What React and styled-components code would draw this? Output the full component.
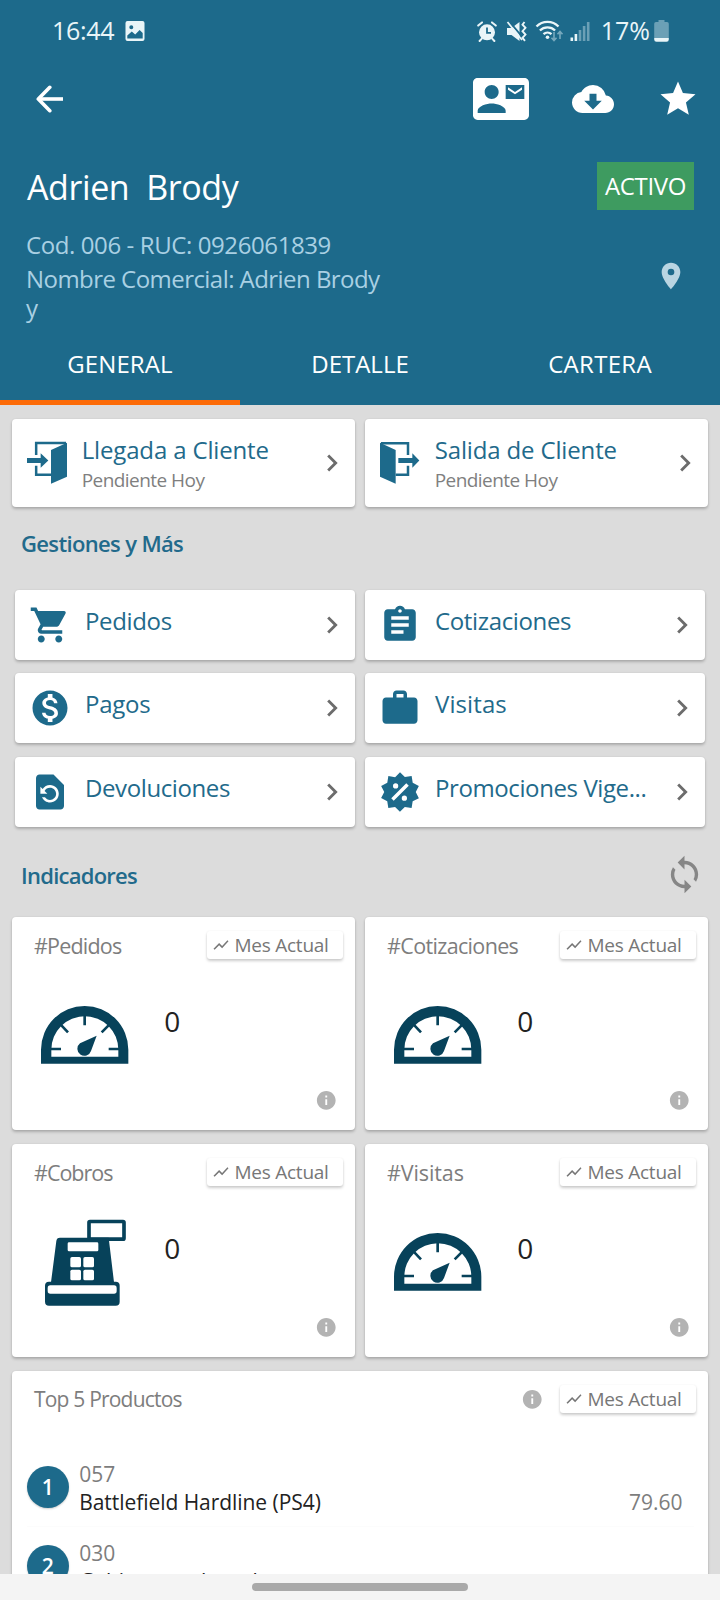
import React from 'react';
import styled, { createGlobalStyle } from 'styled-components';
import {
  MdAssignment,
  MdChevronRight,
  MdCloudDownload,
  MdContactMail,
  MdInfo,
  MdLocationOn,
  MdMonetizationOn,
  MdRestorePage,
  MdShoppingCart,
  MdShowChart,
  MdStar,
  MdSync,
  MdWork,
} from 'react-icons/md';

const BLUE = '#1d6a8b';
const NAVY = '#07425a';

const GlobalStyle = createGlobalStyle`
  * { box-sizing: border-box; }
  body {
    margin: 0;
    font-family: "Open Sans", "Noto Sans", sans-serif;
    background: #dcdcdc;
  }
  svg { display: block; flex: none; }
`;

const Screen = styled.div`
  width: 720px;
  height: 1600px;
  display: flex;
  flex-direction: column;
  overflow: hidden;
  background: #dcdcdc;
`;

/* ---------- header ---------- */

const Header = styled.header`
  flex: none;
  height: 405px;
  display: flex;
  flex-direction: column;
  background: ${BLUE};
  color: #fff;
`;

const StatusBar = styled.div`
  height: 62px;
  padding: 0 51px 0 52px;
  display: flex;
  align-items: center;
  justify-content: space-between;
  color: #e9f5f8;
`;

const StatusGroup = styled.div`
  display: flex;
  align-items: center;
  gap: ${(p) => p.$gap}px;
`;

const StatusText = styled.span`
  padding-bottom: 2px;
  font-size: 25px;
  line-height: 30px;
  letter-spacing: ${(p) => p.$track || 0}px;
`;

const Toolbar = styled.div`
  height: 73px;
  padding: 0 21px 0 35.5px;
  display: flex;
  align-items: center;
  justify-content: space-between;
`;

const Actions = styled.div`
  display: flex;
  align-items: center;
  gap: 43px;
`;

const NameRow = styled.div`
  height: 48px;
  margin: 27px 26px 0 27px;
  display: flex;
  align-items: center;
  justify-content: space-between;
`;

const Name = styled.h1`
  margin: 0;
  padding-top: 2px;
  font-size: 34px;
  line-height: 46px;
  font-weight: 400;
  letter-spacing: -0.4px;
  white-space: pre;
`;

const Badge = styled.span`
  width: 97px;
  height: 48px;
  padding-bottom: 1px;
  display: flex;
  align-items: center;
  justify-content: center;
  background: #3e9b60;
  font-size: 24px;
  letter-spacing: -0.35px;
`;

const InfoRow = styled.div`
  height: 116px;
  padding: 20px 33px 0 26px;
  display: flex;
  justify-content: space-between;
`;

const ClientInfo = styled.div`
  display: flex;
  flex-direction: column;
  gap: 4px;
  width: 370px;
  color: #a9d0e3;
  font-size: 24px;
  line-height: 29.5px;
`;

const Line = styled.div`
  letter-spacing: ${(p) => p.$track}px;
  white-space: pre-line;
`;

const PinSlot = styled.div`
  padding-top: 30px;
  color: #b9d5e2;
`;

const Tabs = styled.nav`
  height: 79px;
  display: grid;
  grid-template-columns: repeat(3, 1fr);
`;

const Tab = styled.div`
  display: flex;
  align-items: center;
  justify-content: center;
  border-bottom: 5px solid ${(p) => (p.$active ? '#fc6b08' : 'transparent')};
  font-size: 24px;
  letter-spacing: ${(p) => p.$track}px;
`;

/* ---------- content ---------- */

const Content = styled.main`
  flex: 1;
  min-height: 0;
  overflow: hidden;
  padding: 14px 12px 0;
`;

const Grid = styled.div`
  display: grid;
  grid-template-columns: 1fr 1fr;
  gap: ${(p) => p.$rowGap}px 10px;
  margin: ${(p) => p.$margin || 0};
`;

const Card = styled.section`
  background: #fff;
  border-radius: 4px;
  box-shadow: 0 2px 3px rgba(0, 0, 0, 0.22), 0 0 2px rgba(0, 0, 0, 0.08);
`;

const VisitCard = styled(Card)`
  height: 88px;
  padding: 0 6.5px 0 14px;
  display: flex;
  align-items: center;
`;

const VisitText = styled.div`
  flex: 1;
  margin-left: 13.7px;
  padding-top: 1px;
  display: flex;
  flex-direction: column;
  gap: 3px;
`;

const VisitTitle = styled.span`
  color: #226a8b;
  font-size: 24px;
  line-height: 30px;
  letter-spacing: -0.15px;
`;

const VisitStatus = styled.span`
  color: #7f7f7f;
  font-size: 19px;
  line-height: 24px;
  letter-spacing: -0.55px;
`;

const SectionHead = styled.div`
  height: ${(p) => p.$height}px;
  padding: ${(p) => p.$drop || 0}px 3px 0 9px;
  display: flex;
  align-items: center;
  justify-content: space-between;
  color: #868686;
`;

const SectionTitle = styled.h2`
  margin: 0;
  color: #226a8b;
  font-size: 22px;
  line-height: 30px;
  font-weight: 600;
  letter-spacing: ${(p) => p.$track}px;
`;

const MenuCard = styled(Card)`
  height: 70px;
  padding: 0 6px 0 14px;
  display: flex;
  align-items: center;
  color: ${BLUE};
`;

const MenuLabel = styled.span`
  flex: 1;
  margin-left: 14px;
  padding-bottom: 8px;
  color: #226a8b;
  font-size: 24px;
  line-height: 32px;
  letter-spacing: ${(p) => p.$track}px;
  white-space: nowrap;
`;

const Chevron = styled(MdChevronRight)`
  width: 34px;
  height: 34px;
  color: #6c6c6c;
`;

/* ---------- indicators ---------- */

const StatCard = styled(Card)`
  height: 213.5px;
  display: flex;
  flex-direction: column;
`;

const CardHead = styled.div`
  padding: 14px 12px 0 22px;
  display: flex;
  align-items: center;
  justify-content: space-between;
`;

const CardTitle = styled.h3`
  margin: 0;
  padding-top: 1.5px;
  color: #7d7d7d;
  font-size: ${(p) => p.$size || 21.5}px;
  line-height: 27px;
  font-weight: 400;
  letter-spacing: ${(p) => p.$track}px;
`;

const ChipBox = styled.span`
  width: 136.5px;
  height: 28.5px;
  padding-left: 5px;
  display: flex;
  align-items: center;
  gap: 5px;
  border-radius: 3px;
  background: #fff;
  box-shadow: 0 2px 3px rgba(0, 0, 0, 0.2), 0 0 2px rgba(0, 0, 0, 0.05);
  color: #777;
  font-size: 19px;
  line-height: 28px;
  letter-spacing: -0.25px;
`;

const StatBody = styled.div`
  flex: 1;
  padding: 30.5px 0 0 27.7px;
  display: flex;
  align-items: flex-start;
  gap: 34.5px;
`;

const StatValue = styled.span`
  margin-top: 12px;
  color: #222;
  font-size: 28px;
  line-height: 39px;
`;

const StatFoot = styled.div`
  display: flex;
  justify-content: flex-end;
  padding: 0 18px 18.5px 0;
`;

const InfoIcon = styled(MdInfo)`
  width: 22.5px;
  height: 22.5px;
  color: #b3b3b3;
`;

/* ---------- top products ---------- */

const TopCard = styled(Card)`
  margin-top: 13.5px;
  height: 420px;
`;

const HeadRight = styled.div`
  display: flex;
  align-items: center;
  gap: 16px;
`;

const ProductList = styled.ul`
  list-style: none;
  margin: 34px 0 0;
  padding: 0;
`;

const Product = styled.li`
  height: 79.3px;
  margin: 0 14px 0 14.7px;
  padding-right: 11.5px;
  display: grid;
  grid-template-columns: 42px 1fr auto;
  column-gap: 10.5px;
  align-items: center;
  border-bottom: 1px solid #fcfcfc;
`;

const Rank = styled.span`
  width: 42px;
  height: 42px;
  border-radius: 50%;
  display: flex;
  align-items: center;
  justify-content: center;
  background: ${BLUE};
  box-shadow: 0 1px 2px rgba(0, 0, 0, 0.2);
  color: #fff;
  font-size: 21px;
  font-weight: 600;
  line-height: 30px;
`;

const ProductText = styled.div`
  padding-top: 3px;
  display: flex;
  flex-direction: column;
  font-size: 21px;
  line-height: 28.4px;
`;

const ProductCode = styled.span`
  color: #7d7d7d;
`;

const ProductName = styled.span`
  color: #222;
  white-space: nowrap;
  letter-spacing: -0.05px;
`;

const ProductValue = styled.span`
  align-self: end;
  margin-bottom: 9px;
  color: #7d7d7d;
  font-size: 21px;
  line-height: 28.4px;
`;

const GestureBar = styled.div`
  flex: none;
  height: 26.5px;
  display: flex;
  align-items: center;
  justify-content: center;
  background: #f4f4f4;
`;

const GestureHandle = styled.div`
  width: 216px;
  height: 8px;
  border-radius: 4px;
  background: #a9a9a9;
`;

/* ---------- icons ---------- */

const ImageIcon = () => (
  <svg width="20" height="20" viewBox="0 0 20 20">
    <path
      fill="currentColor"
      fillRule="evenodd"
      d="M2.5 0h15A2 2 0 0 1 19.500 2v16a2 2 0 0 1-2 2h-15a2 2 0 0 1-2-2V2a2 2 0 0 1 2-2zM6.300 4.200a2 2 0 1 0 0 4 2 2 0 0 0 0-4zM2.300 17.500h15.400v-5.600L14.600 9l-4.400 4.600-3.400-3-4.500 4z"
    />
  </svg>
);

const AlarmIcon = () => (
  <svg width="20" height="21" viewBox="0 0 20 21" fill="none">
    <circle cx="10" cy="11.300" r="8" fill="currentColor" />
    <path d="M1.200 4.600 5 1.400M18.800 4.600 15 1.400M4.800 17.600 2.600 20M15.200 17.600l2.200 2.400" stroke="currentColor" strokeWidth="2" strokeLinecap="round" />
    <path d="M10 6.500v5.300h4" stroke={BLUE} strokeWidth="1.800" />
  </svg>
);

const MuteIcon = () => (
  <svg width="21" height="21" viewBox="0 0 21 21" fill="none">
    <path d="M1 7h4.500L13.500 1v19L5.500 14H1z" fill="currentColor" />
    <path d="M3.800 1.200 14.800 14.200" stroke={BLUE} strokeWidth="1.800" />
    <path d="M1.500 1 16 19" stroke="currentColor" strokeWidth="1.700" />
    <path d="m18.500 1-2 2.600 3 3.200-3 3.400 3 3.400-3 3.200 2.500 3" stroke="currentColor" strokeWidth="1.900" />
  </svg>
);

const WifiIcon = () => (
  <svg width="29" height="22" viewBox="0 0 29 22" fill="none">
    <path d="M1.500 6.500a15.500 15.500 0 0 1 22 0M4.900 10.500a10.800 10.800 0 0 1 15.200 0M8.500 14.200a5.800 5.800 0 0 1 8 0" stroke="currentColor" strokeWidth="2.300" />
    <circle cx="12.500" cy="17.200" r="1.800" fill="currentColor" />
    <path d="M19 12v8.500m-2.500-2.800 2.500 2.800 2.500-2.800M25 19v-7.500m-2.500 2.800 2.500-2.800 2.500 2.800" stroke="#77a9bd" strokeWidth="1.600" />
  </svg>
);

const SignalIcon = () => (
  <svg width="20" height="21" viewBox="0 0 20 21">
    <path fill="currentColor" d="M.5 16.500h2.600V20H.500zM4.600 13h2.600v7H4.600z" />
    <path fill="#6ba0b6" d="M8.700 9h2.600v11H8.700zM12.800 5h2.600v15h-2.600zM16.900 1h2.600v19h-2.600z" />
  </svg>
);

const BatteryIcon = () => (
  <svg width="15" height="22" viewBox="0 0 15 22">
    <path fill="#6ba0b6" d="M4.500 0h6v2H13a1.800 1.800 0 0 1 1.800 1.800V18H.200V3.800A1.800 1.800 0 0 1 2 2h2.500z" />
    <path fill="currentColor" d="M.2 18h14.600v1.500A2.300 2.300 0 0 1 12.500 21.800h-10A2.300 2.300 0 0 1 .200 19.500z" />
  </svg>
);

const BackIcon = () => (
  <svg width="28" height="28" viewBox="0 0 28 28" fill="none" stroke="currentColor" strokeWidth="3.600">
    <path d="M2 14h25" />
    <path d="M13.800 2.300 2.300 14l11.500 11.700" strokeLinecap="round" strokeLinejoin="round" />
  </svg>
);

const EnterIcon = () => (
  <svg width="42" height="45" viewBox="78 123 126 135">
    <path fill="none" stroke={BLUE} strokeWidth="7.500" d="M108.500 165v-36H198M108.500 197v27H153" />
    <path fill={BLUE} d="M153 150 201 128V230L153 251zM81 174h41v-14l23 21.500L122 203v-14H81z" />
  </svg>
);

const ExitIcon = () => (
  <svg width="42" height="45" viewBox="87 123 126 135">
    <path fill="none" stroke={BLUE} strokeWidth="7.500" d="M93 129.500h81V165M137 224h37v-27" />
    <path fill={BLUE} d="M90 128 137 150V251L90 230zM145 174h42v-14l21 21.500L187 203v-14h-42z" />
  </svg>
);

const SaleIcon = () => (
  <svg width="42" height="42" viewBox="0 0 24 24">
    <path
      fill="currentColor"
      fillRule="evenodd"
      d="M18.650 2.850L19.260 6.710L22.770 8.500L21 12L22.780 15.500L19.240 17.290L18.630 21.150L14.740 20.540L11.970 23.300L9.190 20.500L5.330 21.140L4.710 17.250L1.220 15.470L3 11.970L1.230 8.500L4.740 6.690L5.350 2.860L9.220 3.500L12 .69L14.770 3.460L18.650 2.850M9.500 7A1.500 1.500 0 0 0 8 8.500A1.500 1.500 0 0 0 9.500 10A1.500 1.500 0 0 0 11 8.500A1.500 1.500 0 0 0 9.500 7M14.500 14A1.500 1.500 0 0 0 13 15.500A1.500 1.500 0 0 0 14.500 17A1.500 1.500 0 0 0 16 15.500A1.500 1.500 0 0 0 14.500 14M8.410 17L17 8.410L15.590 7L7 15.590L8.410 17Z"
    />
  </svg>
);

const GaugeIcon = () => (
  <svg width="90" height="90" viewBox="120 270 270 270">
    <path
      fill={NAVY}
      fillRule="evenodd"
      d="M123 491v-42a131 131 0 0 1 262 0v42zM154 470h201v-21a100.500 100.500 0 0 0-201 0z"
    />
    <path fill="none" stroke={NAVY} strokeWidth="8" d="M254 346v30M152 447h31M357 447h-31M182 374l22 23M328 374l-23 23" />
    <path fill={NAVY} d="M290 407 273 453A21 21 0 1 1 240 430z" />
  </svg>
);

const RegisterIcon = () => (
  <svg width="90" height="90" viewBox="120 246 270 270">
    <rect x="267" y="259.500" width="105" height="53" rx="3" fill="none" stroke={NAVY} strokeWidth="11" />
    <path fill={NAVY} d="M180 308h146l16 134H153l16-124a11 11 0 0 1 11-10z" />
    <rect x="135" y="440" width="224" height="72" rx="12" fill={NAVY} />
    <g fill="#fff">
      <rect x="203" y="322" width="92" height="27" rx="4" />
      <rect x="211" y="366" width="32" height="31" rx="5" />
      <rect x="250" y="366" width="32" height="31" rx="5" />
      <rect x="211" y="404" width="32" height="32" rx="5" />
      <rect x="250" y="404" width="32" height="32" rx="5" />
      <rect x="143" y="451" width="207" height="25" rx="8" />
    </g>
  </svg>
);

/* ---------- screen ---------- */

const MENU = [
  { label: 'Pedidos', Icon: MdShoppingCart, track: -0.35 },
  { label: 'Cotizaciones', Icon: MdAssignment, track: -0.35 },
  { label: 'Pagos', Icon: MdMonetizationOn, track: -0.25 },
  { label: 'Visitas', Icon: MdWork, track: 0.1 },
  { label: 'Devoluciones', Icon: MdRestorePage, track: -0.4 },
  { label: 'Promociones Vige...', Icon: SaleIcon, track: -0.4 },
];

const STATS = [
  { label: '#Pedidos', Icon: GaugeIcon, track: -0.8 },
  { label: '#Cotizaciones', Icon: GaugeIcon, track: -0.65 },
  { label: '#Cobros', Icon: RegisterIcon, track: -1 },
  { label: '#Visitas', Icon: GaugeIcon, track: -0.1 },
];

const PRODUCTS = [
  { code: '057', name: 'Battlefield Hardline (PS4)', value: '79.60' },
  { code: '030', name: 'Gabinete red con luz', value: '' },
];

const PeriodChip = () => (
  <ChipBox>
    <MdShowChart size={18} />
    Mes Actual
  </ChipBox>
);

export default function App() {
  return (
    <Screen>
      <GlobalStyle />
      <Header>
        <StatusBar>
          <StatusGroup $gap={11}>
            <StatusText $track={-0.3}>16:44</StatusText>
            <ImageIcon />
          </StatusGroup>
          <StatusGroup $gap={6}>
            <StatusGroup $gap={7.5}>
              <StatusGroup $gap={9.5}>
                <AlarmIcon />
                <MuteIcon />
              </StatusGroup>
              <WifiIcon />
            </StatusGroup>
            <StatusGroup $gap={11}>
              <SignalIcon />
              <StatusGroup $gap={4}>
                <StatusText>17%</StatusText>
                <BatteryIcon />
              </StatusGroup>
            </StatusGroup>
          </StatusGroup>
        </StatusBar>
        <Toolbar>
          <BackIcon />
          <Actions>
            <MdContactMail size={56} />
            <MdCloudDownload size={42} />
            <MdStar size={42} />
          </Actions>
        </Toolbar>
        <NameRow>
          <Name>{'Adrien  Brody'}</Name>
          <Badge>ACTIVO</Badge>
        </NameRow>
        <InfoRow>
          <ClientInfo>
            <Line $track={-0.4}>Cod. 006 - RUC: 0926061839</Line>
            <Line $track={-0.55}>{'Nombre Comercial: Adrien Brody\ny'}</Line>
          </ClientInfo>
          <PinSlot>
            <MdLocationOn size={32} />
          </PinSlot>
        </InfoRow>
        <Tabs>
          <Tab $active $track={0.1}>GENERAL</Tab>
          <Tab $track={0}>DETALLE</Tab>
          <Tab $track={0.3}>CARTERA</Tab>
        </Tabs>
      </Header>

      <Content>
        <Grid $rowGap={0}>
          <VisitCard>
            <EnterIcon />
            <VisitText>
              <VisitTitle>Llegada a Cliente</VisitTitle>
              <VisitStatus>Pendiente Hoy</VisitStatus>
            </VisitText>
            <Chevron />
          </VisitCard>
          <VisitCard>
            <ExitIcon />
            <VisitText>
              <VisitTitle>Salida de Cliente</VisitTitle>
              <VisitStatus>Pendiente Hoy</VisitStatus>
            </VisitText>
            <Chevron />
          </VisitCard>
        </Grid>

        <SectionHead $height={72}>
          <SectionTitle $track={-0.65}>Gestiones y Más</SectionTitle>
        </SectionHead>

        <Grid $rowGap={13.4} $margin="11px 3px 0">
          {MENU.map(({ label, Icon, track }) => (
            <MenuCard key={label}>
              <Icon size={42} />
              <MenuLabel $track={track}>{label}</MenuLabel>
              <Chevron />
            </MenuCard>
          ))}
        </Grid>

        <SectionHead $height={90.2} $drop={6}>
          <SectionTitle $track={-0.75}>Indicadores</SectionTitle>
          <MdSync size={41} />
        </SectionHead>

        <Grid $rowGap={13.5}>
          {STATS.map(({ label, Icon, track }) => (
            <StatCard key={label}>
              <CardHead>
                <CardTitle $track={track}>{label}</CardTitle>
                <PeriodChip />
              </CardHead>
              <StatBody>
                <Icon />
                <StatValue>0</StatValue>
              </StatBody>
              <StatFoot>
                <InfoIcon />
              </StatFoot>
            </StatCard>
          ))}
        </Grid>

        <TopCard>
          <CardHead>
            <CardTitle $size={21} $track={-0.8}>Top 5 Productos</CardTitle>
            <HeadRight>
              <InfoIcon />
              <PeriodChip />
            </HeadRight>
          </CardHead>
          <ProductList>
            {PRODUCTS.map(({ code, name, value }, i) => (
              <Product key={code}>
                <Rank>{i + 1}</Rank>
                <ProductText>
                  <ProductCode>{code}</ProductCode>
                  <ProductName>{name}</ProductName>
                </ProductText>
                <ProductValue>{value}</ProductValue>
              </Product>
            ))}
          </ProductList>
        </TopCard>
      </Content>

      <GestureBar>
        <GestureHandle />
      </GestureBar>
    </Screen>
  );
}
